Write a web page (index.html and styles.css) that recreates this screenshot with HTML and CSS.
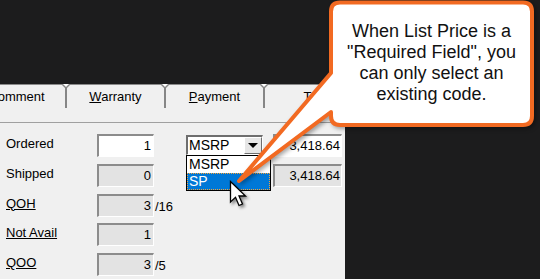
FILE: index.html
```html
<!DOCTYPE html>
<html lang="en">
<head>
    <meta charset="UTF-8">
    <title>List Price Required Field</title>
    <link rel="stylesheet" href="styles.css">
</head>
<body>
    <div class="screen">
        <div class="panel">
            <div class="tabs">
                <div class="tab">Comment</div>
                <div class="tab"><u>W</u>arranty</div>
                <div class="tab"><u>P</u>ayment</div>
                <div class="tab">Tax</div>
            </div>
            <div class="tab-body"></div>

            <div class="rows">
                <div class="row">
                    <div class="label">Ordered</div>
                    <div class="field editable">1</div>
                    <div class="suffix"></div>
                    <div class="combo">
                        <div class="select">
                            <span class="select-text">MSRP</span>
                            <span class="select-btn"><span class="arrow"></span></span>
                        </div>
                        <div class="dropdown">
                            <div class="option">MSRP</div>
                            <div class="option selected">SP</div>
                        </div>
                    </div>
                    <div class="field value editable">3,418.64</div>
                </div>
                <div class="row">
                    <div class="label">Shipped</div>
                    <div class="field">0</div>
                    <div class="suffix"></div>
                    <div class="combo"></div>
                    <div class="field value">3,418.64</div>
                </div>
                <div class="row">
                    <div class="label"><u>QOH</u></div>
                    <div class="field">3</div>
                    <div class="suffix">/16</div>
                </div>
                <div class="row">
                    <div class="label"><u>Not Avail</u></div>
                    <div class="field">1</div>
                    <div class="suffix"></div>
                </div>
                <div class="row">
                    <div class="label"><u>QOO</u></div>
                    <div class="field">3</div>
                    <div class="suffix">/5</div>
                </div>
            </div>
        </div>

        <!-- callout bubble with pointer -->
        <svg class="callout-shape" width="540" height="279" viewBox="0 0 540 279">
            <path d="M340,2.5 H523 Q532,2.5 532,11.5 V116 Q532,125 523,125 H340 Q331,125 331,116 V112 L239,181 L331,73 V11.5 Q331,2.5 340,2.5 Z"
                  fill="#fff" stroke="#f26a22" stroke-width="4" stroke-linejoin="round"/>
        </svg>
        <div class="callout-text">When List Price is a "Required Field", you can only select an existing code.</div>

        <svg class="cursor" width="22" height="30" viewBox="0 0 22 30">
            <path d="M1.5,1.5 L1.5,22 L6.5,17.3 L10,25.5 L13.5,24 L10,16 L16.5,16 Z"
                  fill="#fff" stroke="#000" stroke-width="1.3" stroke-linejoin="miter"/>
        </svg>
    </div>
</body>
</html>
```

FILE: styles.css
```css
body {
    margin: 0;
    background-color: #1c1c1d;
    font-family: "Liberation Sans", Arial, sans-serif;
    font-size: 13px;
    color: #000;
}
.screen {
    position: relative;
    width: 540px;
    height: 279px;
    overflow: hidden;
}
.panel {
    width: 345px;
    height: 195px;
    margin-top: 84px;
    background-color: #f0f0f0;
    overflow: hidden;
}
.tabs {
    display: flex;
    margin-left: -32px;
    height: 24px;
    border-top: 1px solid #8a8a8a;
    box-sizing: border-box;
}
.tab {
    position: relative;
    width: 99px;
    flex: none;
    border-right: 2px solid #868686;
    box-sizing: border-box;
    text-align: center;
    line-height: 23px;
}
.tab::before {
    content: "";
    position: absolute;
    right: -6px;
    top: -1px;
    border-left: 5px solid transparent;
    border-right: 5px solid transparent;
    border-top: 5px solid #868686;
}
.tab::after {
    content: "";
    position: absolute;
    right: -4px;
    top: -1px;
    border-left: 3px solid transparent;
    border-right: 3px solid transparent;
    border-top: 3px solid #fff;
}
.tab-body {
    height: 14px;
    border-bottom: 1px solid #a0a0a0;
}
.rows {
    display: flex;
    flex-direction: column;
    gap: 6.75px;
    padding: 11px 0 0 6px;
}
.row {
    display: flex;
    height: 23px;
}
.label {
    width: 91px;
    padding-top: 2px;
    line-height: 15px;
}
.field {
    width: 57px;
    height: 23px;
    box-sizing: border-box;
    border-style: solid;
    border-width: 2px 1px 1px 2px;
    border-color: #8c8c8c #fff #fff #8c8c8c;
    background-color: #e3e3e3;
    text-align: right;
    padding-right: 2px;
    line-height: 20px;
}
.field.editable {
    background-color: #fff;
}
.suffix {
    width: 32px;
    padding-left: 1px;
    line-height: 23px;
    padding-top: 1px;
    box-sizing: border-box;
}
.combo {
    position: relative;
    width: 77px;
    margin-right: 10px;
}
.select {
    display: flex;
    justify-content: space-between;
    height: 20px;
    margin-top: 1px;
    box-sizing: border-box;
    border-style: solid;
    border-width: 2px 1px 1px 2px;
    border-color: #6e6e6e #fff #fff #6e6e6e;
    background-color: #fff;
}
.select-text {
    font-size: 14px;
    line-height: 17px;
    padding-left: 1px;
}
.select-btn {
    display: flex;
    align-items: center;
    justify-content: center;
    width: 18px;
    box-sizing: border-box;
    border-style: solid;
    border-width: 1px;
    border-color: #fff #6e6e6e #6e6e6e #fff;
    background-color: #e6e6e6;
}
.arrow {
    border-left: 5px solid transparent;
    border-right: 5px solid transparent;
    border-top: 5px solid #000;
}
.dropdown {
    position: absolute;
    left: 0;
    top: 21px;
    width: 83px;
    border: 1px solid #000;
    background-color: #fff;
}
.option {
    height: 17px;
    line-height: 17px;
    font-size: 14px;
    padding-left: 2px;
}
.option.selected {
    background-color: #0078d7;
    color: #fff;
    border: 1px dotted #f3a33a;
    height: 15px;
    line-height: 15px;
    padding-left: 1px;
}
.value {
    width: 69px;
    padding-right: 1px;
}
.callout-shape {
    position: absolute;
    left: 0;
    top: 0;
    filter: drop-shadow(2px 2px 2px rgba(0, 0, 0, 0.35));
}
.callout-text {
    position: absolute;
    left: 331px;
    top: 21px;
    width: 201px;
    text-align: center;
    font-size: 18px;
    line-height: 21px;
    color: #111;
}
.cursor {
    position: absolute;
    left: 229px;
    top: 180px;
    filter: drop-shadow(2px 2px 1.5px rgba(0, 0, 0, 0.45));
}
```
